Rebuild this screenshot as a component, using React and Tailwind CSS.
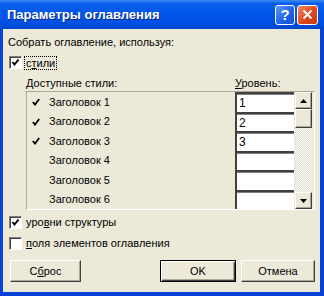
import React from "react";

const styles = [
  { name: "Заголовок 1", on: true, level: "1", h: "h-[20px]" },
  { name: "Заголовок 2", on: true, level: "2", h: "h-[19px]" },
  { name: "Заголовок 3", on: true, level: "3", h: "h-[20px]" },
  { name: "Заголовок 4", on: false, level: "", h: "h-[19px]" },
  { name: "Заголовок 5", on: false, level: "", h: "h-[20px]" },
  { name: "Заголовок 6", on: false, level: "", h: "h-[19px]" },
];

function CheckBox({ checked }) {
  return (
    <div className="w-[13px] h-[13px] shrink-0 bg-white border border-t-[#808080] border-l-[#808080] border-r-white border-b-white shadow-[inset_1px_1px_0_#404040]">
      {checked && (
        <svg width="11" height="11" viewBox="0 0 11 11">
          <path d="M2.5 5 L4.5 7.5 L8.5 2.5" fill="none" stroke="#000" strokeWidth="2" />
        </svg>
      )}
    </div>
  );
}

function Button({ children, def, className = "" }) {
  return (
    <div
      className={
        "h-[22px] flex items-center justify-center bg-[#ECE9D8] " +
        (def
          ? "border border-black shadow-[inset_1px_1px_0_#fff,inset_-1px_-1px_0_#404040,inset_-2px_-2px_0_#aca899] "
          : "border border-t-white border-l-white border-r-[#404040] border-b-[#404040] shadow-[inset_-1px_-1px_0_#aca899] ") +
        className
      }
    >
      {children}
    </div>
  );
}

function ScrollButton({ down }) {
  return (
    <div className="h-[17px] flex items-center justify-center bg-[#ECE9D8] border border-t-white border-l-white border-r-[#404040] border-b-[#404040] shadow-[inset_-1px_-1px_0_#aca899]">
      <svg width="7" height="4" viewBox="0 0 7 4">
        {down ? <path d="M0 0 H7 L3.5 4 Z" fill="#000" /> : <path d="M0 4 H7 L3.5 0 Z" fill="#000" />}
      </svg>
    </div>
  );
}

export default function App() {
  return (
    <div className="w-[324px] h-[296px] flex flex-col bg-[#0842D6] font-['Liberation_Sans',sans-serif] text-[11px] text-black overflow-hidden">
      {/* Title bar */}
      <div className="h-[29px] flex items-center pl-[7px] pr-[6px] bg-[linear-gradient(to_bottom,#3b8cf5_0%,#0a5fe8_12%,#0055ea_50%,#0050e0_85%,#0043c8_100%)]">
        <div className="flex-1 text-white font-bold text-[13px] [text-shadow:1px_1px_0_#0a2a8a]">
          Параметры оглавления
        </div>
        <div className="flex gap-[2px] items-center">
          <div className="w-[20px] h-[20px] rounded-[3px] border border-white bg-[linear-gradient(135deg,#5a9bff,#1e5ee8_60%,#1a4fd0)] flex items-center justify-center text-white font-bold text-[15px] leading-none">
            ?
          </div>
          <div className="w-[21px] h-[20px] rounded-[3px] border border-white bg-[linear-gradient(135deg,#f0886a,#e0481d_55%,#c83a12)] flex items-center justify-center">
            <svg width="11" height="11" viewBox="0 0 11 11">
              <path d="M1.5 1.5 L9.5 9.5 M9.5 1.5 L1.5 9.5" stroke="#fff" strokeWidth="2" />
            </svg>
          </div>
        </div>
      </div>

      {/* Body */}
      <div className="flex-1 ml-[3px] mr-[4px] mb-[4px] bg-[#ECE9D8] flex flex-col">
        <div className="mt-[7px] ml-[5px] leading-[13px]">Собрать оглавление, используя:</div>

        <div className="mt-[7px] ml-[6px] flex items-center h-[13px]">
          <CheckBox checked />
          <div className="ml-[2px] px-[1px] h-[14px] leading-[12px] border border-dotted border-black">
            с<span className="underline">т</span>или
          </div>
        </div>

        <div className="mt-[9px] h-[13px] leading-[11px] ml-[23px] flex">
          <div className="w-[209px]">Доступные стили:</div>
          <div>
            <span className="underline">У</span>ровень:
          </div>
        </div>

        {/* Styles list */}
        <div className="ml-[23px] w-[289px] h-[119px] flex border border-t-[#aca899] border-l-[#aca899] border-r-white border-b-white">
          <div className="flex flex-col">
            {styles.map((s) => (
              <div key={s.name} className={"flex " + s.h}>
                <div className="w-[208px] flex items-center">
                  <div className="w-[22px] pl-[5px]">
                    {s.on && (
                      <svg width="8" height="8" viewBox="0 0 8 8">
                        <path d="M0.8 4 L3 6.6 L7.2 1" fill="none" stroke="#000" strokeWidth="1.8" />
                      </svg>
                    )}
                  </div>
                  <div>{s.name}</div>
                </div>
                <div className="w-[59px] bg-white border-t-2 border-l-2 border-t-[#404040] border-l-[#404040] shadow-[inset_0_1px_0_#808080] flex items-center pl-[2px] text-[12px]">
                  {s.level}
                </div>
              </div>
            ))}
          </div>
          <div className="ml-[1px] w-[17px] flex flex-col">
            <ScrollButton />
            <div className="h-[19px] bg-[#ECE9D8] border border-t-white border-l-white border-r-[#404040] border-b-[#404040] shadow-[inset_-1px_-1px_0_#aca899]" />
            <div className="flex-1 bg-[repeating-conic-gradient(#ffffff_0_25%,#dcd8c8_0_50%)] bg-[length:2px_2px]" />
            <ScrollButton down />
          </div>
        </div>

        <div className="mt-[6px] ml-[6px] flex items-center h-[13px]">
          <CheckBox checked />
          <div className="ml-[4px]">
            уро<span className="underline">в</span>ни структуры
          </div>
        </div>

        <div className="mt-[8px] ml-[6px] flex items-center h-[13px]">
          <CheckBox />
          <div className="ml-[4px]">
            <span className="underline">п</span>оля элементов оглавления
          </div>
        </div>

        <div className="mt-[10px] flex items-center">
          <Button className="ml-[7px] w-[71px]">
            <span>
              С<span className="underline">б</span>рос
            </span>
          </Button>
          <Button def className="ml-auto w-[76px]">
            OK
          </Button>
          <Button className="ml-[5px] mr-[5px] w-[74px]">Отмена</Button>
        </div>
      </div>
    </div>
  );
}
